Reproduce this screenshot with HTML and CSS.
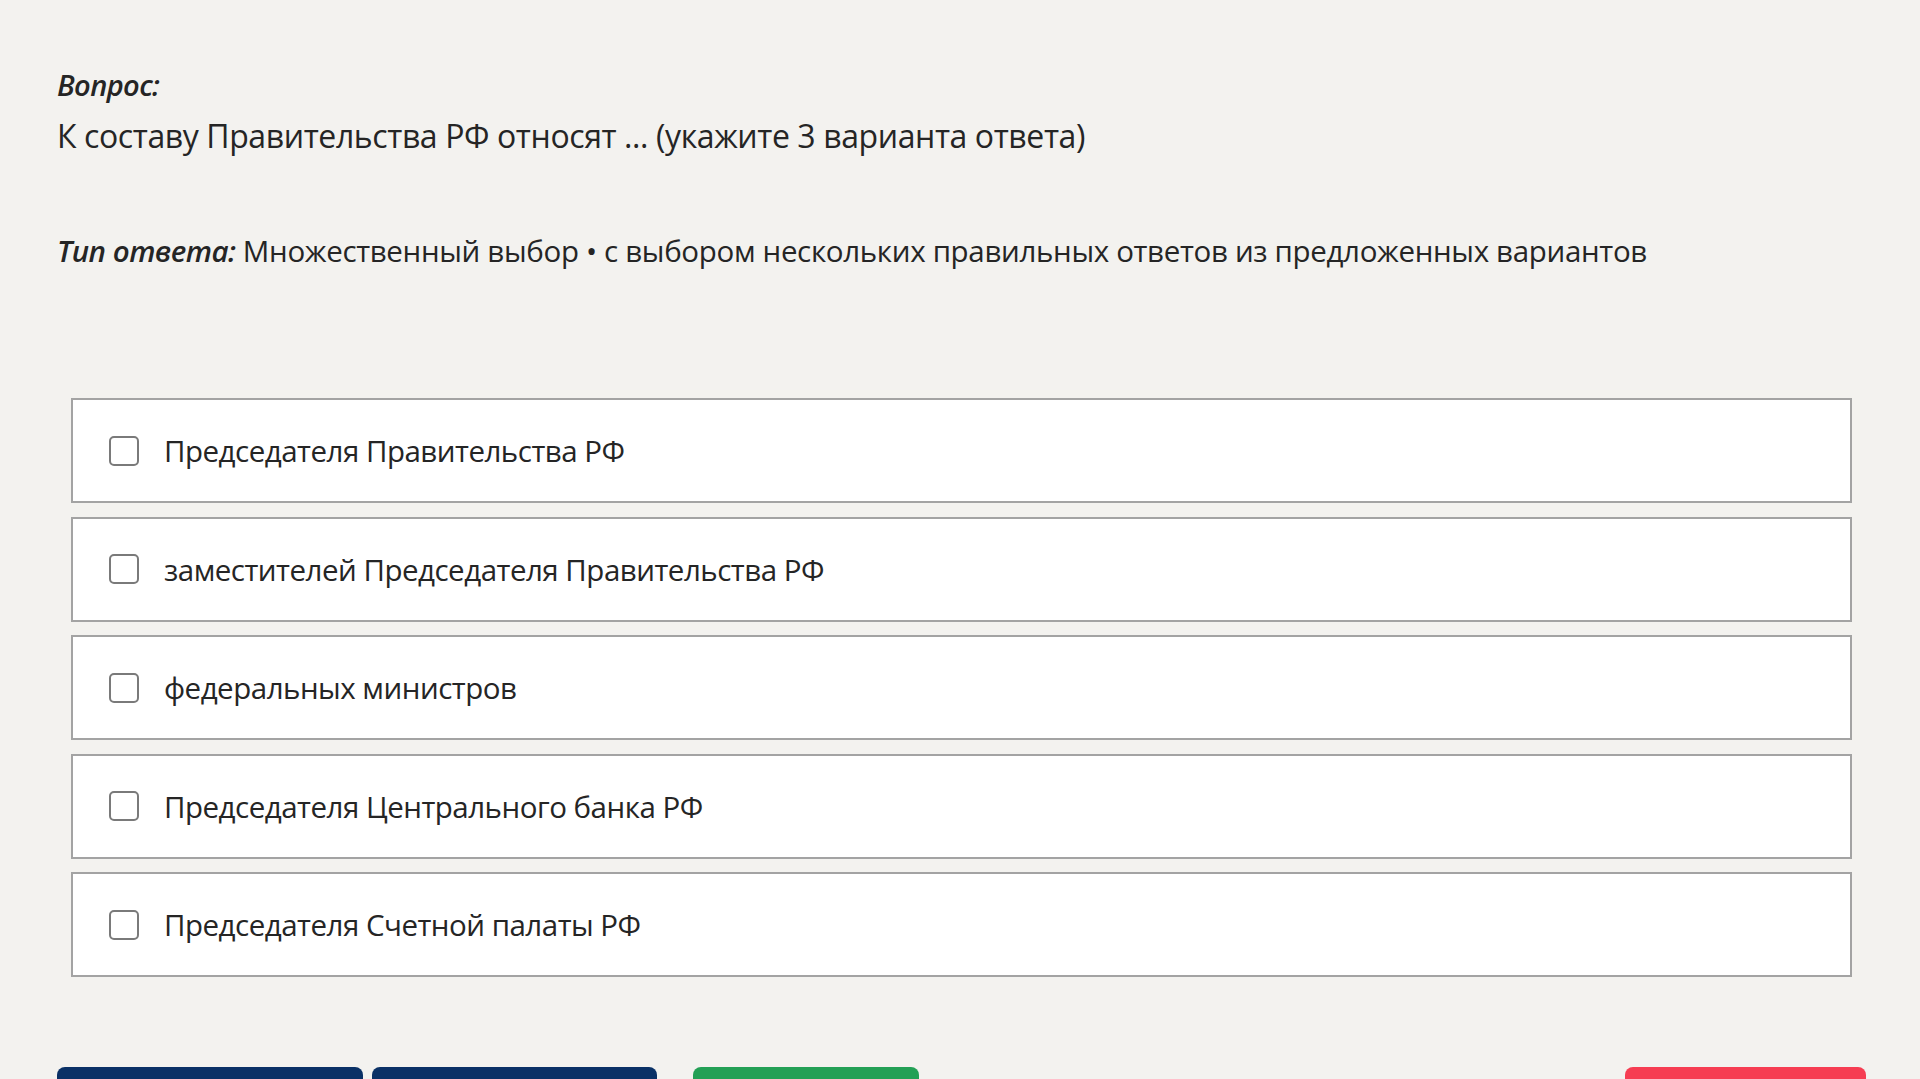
FILE: index.html
```html
<!DOCTYPE html>
<html lang="ru">
<head>
    <meta charset="UTF-8">
    <meta name="viewport" content="width=device-width, initial-scale=1.0">
    <title>Вопрос</title>
    <link rel="stylesheet" href="styles.css">
</head>
<body>
    <div class="page">
        <div class="question">
            <div class="label">Вопрос:</div>
            <div class="question-text">К составу Правительства РФ относят ... (укажите 3 варианта ответа)</div>
        </div>

        <div class="answer-type">
            <span class="label">Тип ответа:</span> Множественный выбор • с выбором нескольких правильных ответов из предложенных вариантов
        </div>

        <div class="options">
            <label class="option"><span class="checkbox"></span><span class="option-text">Председателя Правительства РФ</span></label>
            <label class="option"><span class="checkbox"></span><span class="option-text">заместителей Председателя Правительства РФ</span></label>
            <label class="option"><span class="checkbox"></span><span class="option-text">федеральных министров</span></label>
            <label class="option"><span class="checkbox"></span><span class="option-text">Председателя Центрального банка РФ</span></label>
            <label class="option"><span class="checkbox"></span><span class="option-text">Председателя Счетной палаты РФ</span></label>
        </div>

        <div class="actions">
            <div class="action-group">
                <button class="btn btn-nav btn-prev"></button>
                <button class="btn btn-nav btn-next"></button>
            </div>
            <button class="btn btn-check"></button>
            <button class="btn btn-finish"></button>
        </div>
    </div>
</body>
</html>
```

FILE: styles.css
```css
:root {
    --bg: #f3f2ef;
    --text: #252525;
    --navy: #0a3166;
    --green: #23a055;
    --red: #f63d52;
}

* {
    margin: 0;
    padding: 0;
    box-sizing: border-box;
}

body {
    font-family: 'Open Sans', 'Noto Sans', sans-serif;
    background-color: var(--bg);
    color: var(--text);
    overflow: hidden;
}

.page {
    padding: 66px 54px 0 57px;
}

.label {
    font-style: italic;
    font-weight: 600;
}

.question .label {
    font-size: 29px;
    line-height: 38px;
    letter-spacing: -0.6px;
}

.question-text {
    margin-top: 7px;
    font-size: 32px;
    line-height: 50px;
    letter-spacing: -0.4px;
}

.answer-type {
    margin-top: 65px;
    font-size: 29.5px;
    line-height: 50px;
    letter-spacing: -0.33px;
}

.answer-type .label {
    letter-spacing: -0.5px;
}

.options {
    margin: 122px 14px 0;
    display: flex;
    flex-direction: column;
    gap: 13.5px;
}

.option {
    display: flex;
    align-items: center;
    height: 105px;
    padding: 0 36px;
    background: white;
    border: 2px solid #a3a3a3;
    cursor: pointer;
}

.checkbox {
    width: 30px;
    height: 30px;
    border: 2px solid #7a7a7a;
    border-radius: 5px;
    flex-shrink: 0;
    margin-right: 25px;
}

.option-text {
    font-size: 29.5px;
    letter-spacing: -0.5px;
}

.actions {
    display: flex;
    align-items: flex-start;
    margin-top: 90px;
}

.action-group {
    display: flex;
    gap: 9px;
}

.btn {
    height: 60px;
    border: none;
    border-radius: 8px;
    cursor: pointer;
}

.btn-nav {
    background-color: var(--navy);
}

.btn-prev {
    width: 306px;
}

.btn-next {
    width: 285px;
}

.btn-check {
    width: 226px;
    margin-left: 36px;
    background-color: var(--green);
}

.btn-finish {
    width: 241px;
    margin-left: auto;
    background-color: var(--red);
}
```
